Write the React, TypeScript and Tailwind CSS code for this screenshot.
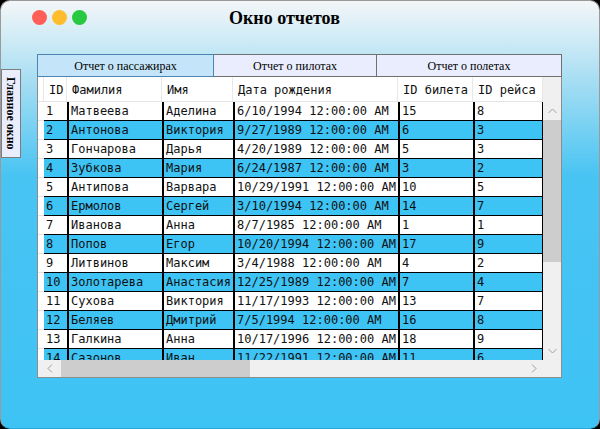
import React from "react";

const rows: [string, string, string, string, string, string][] = [
  ["1", "Матвеева", "Аделина", "6/10/1994 12:00:00 AM", "15", "8"],
  ["2", "Антонова", "Виктория", "9/27/1989 12:00:00 AM", "6", "3"],
  ["3", "Гончарова", "Дарья", "4/20/1989 12:00:00 AM", "5", "3"],
  ["4", "Зубкова", "Мария", "6/24/1987 12:00:00 AM", "3", "2"],
  ["5", "Антипова", "Варвара", "10/29/1991 12:00:00 AM", "10", "5"],
  ["6", "Ермолов", "Сергей", "3/10/1994 12:00:00 AM", "14", "7"],
  ["7", "Иванова", "Анна", "8/7/1985 12:00:00 AM", "1", "1"],
  ["8", "Попов", "Егор", "10/20/1994 12:00:00 AM", "17", "9"],
  ["9", "Литвинов", "Максим", "3/4/1988 12:00:00 AM", "4", "2"],
  ["10", "Золотарева", "Анастасия", "12/25/1989 12:00:00 AM", "7", "4"],
  ["11", "Сухова", "Виктория", "11/17/1993 12:00:00 AM", "13", "7"],
  ["12", "Беляев", "Дмитрий", "7/5/1994 12:00:00 AM", "16", "8"],
  ["13", "Галкина", "Анна", "10/17/1996 12:00:00 AM", "18", "9"],
  ["14", "Сазонов", "Иван", "11/22/1991 12:00:00 AM", "11", "6"],
];

const widths = [23, 95, 71, 165, 75, 70];
const headers = ["ID", "Фамилия", "Имя", "Дата рождения", "ID билета", "ID рейса"];

export default function App() {
  return (
    <div className="w-[600px] h-[429px] bg-black">
      <div className="w-[600px] h-[429px] rounded-[10px] border-t border-x border-[#9a9a9a] border-b border-b-[#2aa8d8] bg-[linear-gradient(to_bottom,#f3f6f8_0px,#d2ecf6_35px,#abdff3_75px,#48c4f3_175px,#3ec3f5_100%)] flex flex-col overflow-hidden">
        {/* title bar */}
        <div className="h-[33px] flex items-center pl-[31px] shrink-0">
          <div className="w-[15px] h-[15px] rounded-full bg-[#ff5f57]" />
          <div className="w-[15px] h-[15px] rounded-full bg-[#ffbd2e] ml-[5px]" />
          <div className="w-[15px] h-[15px] rounded-full bg-[#28c840] ml-[5px]" />
          <div className="ml-[142px] text-[18px] font-bold text-black leading-none [font-family:'Liberation_Serif',serif]">
            Окно отчетов
          </div>
        </div>
        <div className="flex pt-[20px]">
          {/* left vertical tab */}
          <div className="w-[36px] pt-[15px] shrink-0">
            <div className="w-[20px] h-[89px] bg-[#e9edfc] border border-[#7d7d7d] flex items-center justify-center">
              <span className="[writing-mode:vertical-rl] text-[12px] font-bold text-black [font-family:'Liberation_Serif',serif] leading-none">
                Главное окно
              </span>
            </div>
          </div>
          {/* main panel */}
          <div className="w-[525px] flex flex-col">
            <div className="flex h-[23px] text-[12px] text-black [font-family:'Liberation_Serif',serif]">
              <div className="w-[177px] bg-[#c4e5f9] border border-[#4a86b4] flex items-center justify-center">
                Отчет о пассажирах
              </div>
              <div className="w-[163px] bg-[#e9edfd] border-y border-r border-[#707070] flex items-center justify-center">
                Отчет о пилотах
              </div>
              <div className="w-[185px] bg-[#e9edfd] border-y border-r border-[#707070] flex items-center justify-center">
                Отчет о полетах
              </div>
            </div>
            {/* grid */}
            <div className="h-[301px] bg-white border-x border-b border-[#8c8c8c] flex flex-col [font-family:'DejaVu_Sans_Mono',monospace] text-[12px] text-[#111]">
              <div className="flex flex-1 min-h-0">
                <div className="w-[505px] flex flex-col overflow-hidden">
                  {/* header */}
                  <div className="flex h-[25px] shrink-0 border-b border-[#e4e4e4]">
                    <div className="w-[6px] border-r border-[#e8e8e8]" />
                    {headers.map((h, i) => (
                      <div
                        key={h}
                        style={{ width: widths[i] }}
                        className="flex items-center pl-[5px] pt-[2px] border-r border-[#e8e8e8] whitespace-nowrap"
                      >
                        {h}
                      </div>
                    ))}
                  </div>
                  {rows.map((r, ri) => (
                    <div key={ri} className="flex h-[19px] shrink-0">
                      <div className="w-[6px] bg-white border-b border-[#e4e4e4]" />
                      {r.map((c, ci) => (
                        <div
                          key={ci}
                          style={{ width: widths[ci] }}
                          className={
                            (ri % 2 === 1 ? "bg-[#3ec3f5] " : "bg-white ") +
                            (ci === 0 ? "" : "border-l-2 ") +
                            (ci === 5 ? "border-r " : "") +
                            "border-b border-black flex items-center pl-[2px] whitespace-nowrap overflow-hidden leading-none"
                          }
                        >
                          {c}
                        </div>
                      ))}
                    </div>
                  ))}
                </div>
                {/* vertical scrollbar */}
                <div className="w-[18px] bg-[#f0f0f0] flex flex-col">
                  <div className="h-[25px]" />
                  <div className="h-[18px] flex items-center justify-center">
                    <svg width="9" height="6" viewBox="0 0 9 6"><path d="M0.5 5 L4.5 1 L8.5 5" fill="none" stroke="#a0a0a0" strokeWidth="1" /></svg>
                  </div>
                  <div className="h-[142px] bg-[#cdcdcd]" />
                  <div className="flex-1" />
                  <div className="h-[18px] flex items-center justify-center">
                    <svg width="9" height="6" viewBox="0 0 9 6"><path d="M0.5 1 L4.5 5 L8.5 1" fill="none" stroke="#a0a0a0" strokeWidth="1" /></svg>
                  </div>
                </div>
              </div>
              {/* horizontal scrollbar */}
              <div className="h-[17px] flex bg-[#f0f0f0] shrink-0">
                <div className="w-[23px] flex items-center justify-center">
                  <svg width="6" height="9" viewBox="0 0 6 9"><path d="M5 0.5 L1 4.5 L5 8.5" fill="none" stroke="#a0a0a0" strokeWidth="1" /></svg>
                </div>
                <div className="w-[189px] bg-[#cdcdcd]" />
                <div className="flex-1" />
                <div className="w-[18px] flex items-center justify-center">
                  <svg width="6" height="9" viewBox="0 0 6 9"><path d="M1 0.5 L5 4.5 L1 8.5" fill="none" stroke="#a0a0a0" strokeWidth="1" /></svg>
                </div>
                <div className="w-[18px]" />
              </div>
            </div>
          </div>
        </div>
      </div>
    </div>
  );
}
